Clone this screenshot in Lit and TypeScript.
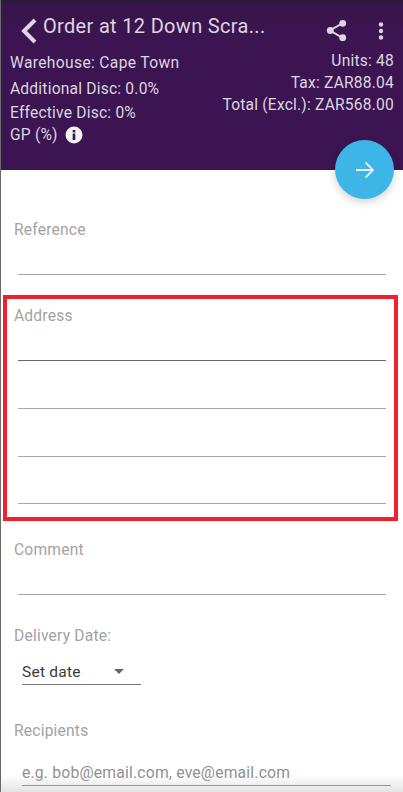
import { LitElement, html, css } from "lit";
import { customElement } from "lit/decorators.js";

@customElement("app-root")
export class AppRoot extends LitElement {
  static styles = css`
    :host {
      display: block;
      position: relative;
      width: 403px;
      height: 792px;
      overflow: hidden;
      box-sizing: border-box;
      border-left: 1px solid #6a6a6a;
      background: #fff;
      font-family: Roboto, "Liberation Sans", sans-serif;
    }
    .header {
      height: 170px;
      box-sizing: border-box;
      background: linear-gradient(#2c1a3a 0, #381548 6px, #3c1451 30px);
      color: #dcd6e0;
      padding-top: 12px;
      display: flex;
      flex-direction: column;
    }
    .bar {
      display: flex;
      align-items: center;
      height: 28px;
      padding-left: 19px;
    }
    .back { width: 18px; height: 28px; flex: none; margin-top: 7px; }
    .title {
      font-size: 20px;
      line-height: 28px;
      margin-left: 5px;
      letter-spacing: 0.32px;
      flex: 1;
      white-space: nowrap;
    }
    .share { width: 21px; height: 23px; margin-right: 31px; margin-top: 9px; flex: none; }
    .dots { width: 6px; height: 18px; margin-right: 19px; margin-top: 10px; flex: none; }
    .info {
      display: flex;
      justify-content: space-between;
      font-size: 15.6px;
      letter-spacing: 0.2px;
      margin-top: 10px;
      padding: 0 9px;
    }
    .col { display: flex; flex-direction: column; }
    .left div { height: 24px; line-height: 24px; white-space: nowrap; }
    .left .warehouse { height: 26px; letter-spacing: 0.35px; }
    .left .gp { height: 20px; line-height: 20px; display: flex; align-items: center; gap: 7px; }
    .left { margin-top: 1px; }
    .right { align-items: flex-end; }
    .right div { height: 22px; line-height: 22px; white-space: nowrap; }
    .fab {
      position: absolute;
      left: 334px;
      top: 140px;
      width: 59px;
      height: 59px;
      border-radius: 50%;
      background: #3db5e6;
      box-shadow: 0 3px 8px rgba(0, 0, 0, 0.18);
      display: flex;
      align-items: center;
      justify-content: center;
    }
    .form { padding-top: 49px; display: flex; flex-direction: column; }
    .label {
      height: 20px;
      line-height: 22px;
      font-size: 15.6px;
      letter-spacing: 0.2px;
      color: #a3a3a3;
      padding-left: 13px;
    }
    .line {
      box-sizing: border-box;
      height: 48px;
      margin: 0 17px 0 17px;
      border-bottom: 1.5px solid #a6a6a6;
    }
    .line.first { height: 36px; }
    .line.last { height: 47px; }
    .line.dark { border-bottom-color: #666; }
    .box {
      margin: 20px 5px 18px 2px;
      border: 4px solid #f0202e;
      padding: 6px 0 13px;
      box-sizing: border-box;
      height: 226px;
    }
    .box .label { padding-left: 7px; }
    .box .line { margin: 0 8px 0 11px; }
    .date { margin-top: 30px; }
    .select {
      box-sizing: border-box;
      margin: 14px 0 35px 21px;
      width: 119px;
      height: 26px;
      border-bottom: 1px solid #777;
      display: flex;
      align-items: center;
      justify-content: space-between;
      padding-right: 17px;
      font-size: 15.5px;
      letter-spacing: 0.25px;
      color: #3a3a3a;
    }
    .caret {
      width: 0;
      height: 0;
      border-left: 5px solid transparent;
      border-right: 5px solid transparent;
      border-top: 5px solid #666;
    }
    .input {
      box-sizing: border-box;
      margin: 21px 12px 0 21px;
      height: 25px;
      border-bottom: 1px solid #777;
      font-size: 15.7px;
      line-height: 24px;
      letter-spacing: 0.2px;
      color: #8f8f8f;
      white-space: nowrap;
    }
    .fade {
      position: absolute;
      left: 0;
      right: 0;
      bottom: 0;
      height: 17px;
      background: linear-gradient(rgba(210, 210, 210, 0), rgba(205, 205, 205, 0.55));
      pointer-events: none;
    }
  `;

  render() {
    return html`
      <div class="header">
        <div class="bar">
          <svg class="back" viewBox="0 0 18 28">
            <path d="M15 4 L4 15 L15 26" fill="none" stroke="#dcd6e0" stroke-width="4" />
          </svg>
          <div class="title">Order at 12 Down Scra...</div>
          <svg class="share" viewBox="0 0 22 24">
            <path d="M18 4 L4 12 L18 20" fill="none" stroke="#dcd6e0" stroke-width="2" />
            <circle cx="17.5" cy="4.5" r="3.6" fill="#dcd6e0" />
            <circle cx="4.5" cy="12" r="3.6" fill="#dcd6e0" />
            <circle cx="17.5" cy="19.5" r="3.6" fill="#dcd6e0" />
          </svg>
          <svg class="dots" viewBox="0 0 6 18">
            <circle cx="3" cy="2.5" r="2.2" fill="#dcd6e0" />
            <circle cx="3" cy="9" r="2.2" fill="#dcd6e0" />
            <circle cx="3" cy="15.5" r="2.2" fill="#dcd6e0" />
          </svg>
        </div>
        <div class="info">
          <div class="col left">
            <div class="warehouse">Warehouse: Cape Town</div>
            <div>Additional Disc: 0.0%</div>
            <div>Effective Disc: 0%</div>
            <div class="gp">
              GP (%)
              <svg width="18" height="18" viewBox="0 0 18 18">
                <circle cx="9" cy="9" r="8.5" fill="#f4f2f5" />
                <rect x="7.7" y="7.5" width="2.6" height="6.5" fill="#3c1451" />
                <rect x="7.7" y="4" width="2.6" height="2.4" fill="#3c1451" />
              </svg>
            </div>
          </div>
          <div class="col right">
            <div>Units: 48</div>
            <div>Tax: ZAR88.04</div>
            <div>Total (Excl.): ZAR568.00</div>
          </div>
        </div>
      </div>
      <div class="fab">
        <svg width="20" height="20" viewBox="0 0 20 20">
          <path d="M1 10 H18 M10.5 2.5 L18 10 L10.5 17.5" fill="none" stroke="#e8f6fc" stroke-width="1.8" />
        </svg>
      </div>
      <div class="form">
        <div class="label">Reference</div>
        <div class="line first"></div>
        <div class="box">
          <div class="label">Address</div>
          <div class="line first dark"></div>
          <div class="line"></div>
          <div class="line"></div>
          <div class="line last"></div>
        </div>
        <div class="label">Comment</div>
        <div class="line first"></div>
        <div class="label date">Delivery Date:</div>
        <div class="select"><span>Set date</span><span class="caret"></span></div>
        <div class="label">Recipients</div>
        <div class="input">e.g. bob@email.com, eve@email.com</div>
      </div>
      <div class="fade"></div>
    `;
  }
}
